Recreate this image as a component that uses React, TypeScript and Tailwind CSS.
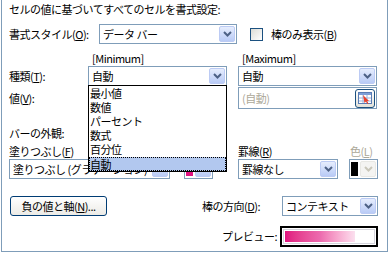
import React from 'react'

function Chevron({ disabled }: { disabled?: boolean }) {
  return (
    <svg width="9" height="6" viewBox="0 0 9 6">
      <path
        d="M1 1 L4.5 4.5 L8 1"
        fill="none"
        stroke={disabled ? '#c9c7ba' : '#4d6185'}
        strokeWidth="2"
      />
    </svg>
  )
}

function ArrowButton({ disabled }: { disabled?: boolean }) {
  if (disabled) {
    return (
      <div className="ml-auto flex h-[16px] w-[16px] shrink-0 items-center justify-center rounded-[2px] border border-[#e8e8e4] bg-[#f4f4f2]">
        <Chevron disabled />
      </div>
    )
  }
  return (
    <div className="ml-auto flex h-[16px] w-[16px] shrink-0 items-center justify-center rounded-[2px] border border-[#bccbf4] bg-linear-to-b from-[#e6edfd] to-[#b9cbf6]">
      <Chevron />
    </div>
  )
}

function Combo({ className, clip, children }: { className: string; clip?: boolean; children?: React.ReactNode }) {
  return (
    <div className={`flex h-[20px] items-center border border-[#7f9db9] bg-white pl-[3px] pr-px ${className}`}>
      <span className={clip ? 'min-w-0 overflow-hidden whitespace-nowrap leading-[18px]' : 'whitespace-nowrap'}>
        {children}
      </span>
      <ArrowButton />
    </div>
  )
}

function RangeIcon() {
  return (
    <div className="flex h-[19px] w-[20px] items-center justify-center rounded-[3px] border border-[#1c5180] bg-linear-to-b from-white to-[#e3e2da]">
      <svg width="14" height="12" viewBox="0 0 14 12">
        <rect x="0.5" y="0.5" width="13" height="11" fill="#fff" stroke="#5a7cb4" />
        <rect x="1" y="1" width="12" height="2" fill="#7d9fd6" />
        <path d="M1 6 H13 M1 9 H13 M5 3 V11 M9 3 V11" stroke="#9db3da" strokeWidth="1" />
        <path d="M5 3 L11 9 L9 9 L10.5 11.5 L9.5 12 L8 9.6 L6.5 11 Z" fill="#e8412c" />
      </svg>
    </div>
  )
}

export default function App() {
  return (
    <div className="h-[254px] w-[390px] bg-white pl-px font-['Noto_Sans_CJK_JP',sans-serif] text-[11px] leading-[13px] tracking-[-0.5px] text-black">
      <div className="relative h-[252px] w-[387px] border-x border-b border-[#7f9db9] pl-[7px]">
        {/* title */}
        <div className="pt-[3px]">セルの値に基づいてすべてのセルを書式設定:</div>

        {/* style row */}
        <div className="mt-[8px] flex h-[20px] items-center">
          <div className="w-[90px]">書式スタイル(<span className="underline">O</span>):</div>
          <Combo className="w-[138px]">データ バー</Combo>
          <div className="ml-[13px] h-[13px] w-[13px] border border-[#1c5180] bg-linear-to-br from-[#dcdcd6] to-white" />
          <div className="ml-[8px]">棒のみ表示(<span className="underline">B</span>)</div>
        </div>

        {/* min / max headings */}
        <div className="mt-[8px] flex h-[13px]">
          <div className="w-[231px] pl-[83px]">[Minimum]</div>
          <div className="pl-[2px]">[Maximum]</div>
        </div>

        {/* type row */}
        <div className="mt-px flex h-[20px] items-center">
          <div className="w-[79px]">種類(<span className="underline">T</span>):</div>
          <Combo className="w-[139px]">自動</Combo>
          <Combo className="ml-[11px] w-[139px]">自動</Combo>
        </div>

        {/* value row */}
        <div className="mt-px flex h-[22px] items-center">
          <div className="w-[79px]">値(<span className="underline">V</span>):</div>
          <div className="flex h-[22px] w-[139px] items-center border border-[#7f9db9] pl-[3px] pr-px text-[#aca899]">(自動)</div>
          <div className="ml-[11px] flex h-[22px] w-[139px] items-center border border-[#7f9db9] pl-[3px] pr-px text-[#aca899]">
            <span>(自動)</span>
            <div className="ml-auto">
              <RangeIcon />
            </div>
          </div>
        </div>

        {/* appearance */}
        <div className="mt-[18px]">バーの外観:</div>

        <div className="mt-[5px] flex h-[13px]">
          <div className="w-[229px]">塗りつぶし(<span className="underline">F</span>)</div>
          <div className="w-[112px]">罫線(<span className="underline">R</span>)</div>
          <div className="text-[#aca899]">色(<span className="underline">L</span>)</div>
        </div>

        <div className="mt-px flex h-[20px] items-center">
          <Combo className="w-[161px]" clip>塗りつぶし (グラデーション)</Combo>
          <div className="ml-[14px] flex h-[20px] w-[29px] items-center border border-[#7f9db9] pl-px pr-px">
            <div className="h-[14px] w-[7px] bg-[#e0117f]" />
            <ArrowButton />
          </div>
          <Combo className="ml-[25px] w-[100px]">罫線なし</Combo>
          <div className="ml-[11px] flex h-[20px] w-[29px] items-center border border-[#7f9db9] pl-px pr-px">
            <div className="h-[14px] w-[7px] bg-black" />
            <ArrowButton disabled />
          </div>
        </div>

        {/* negative / direction */}
        <div className="mt-[17px] flex h-[20px] items-center">
          <div className="ml-px flex h-[20px] w-[97px] items-center justify-center rounded-[3px] border border-[#003c74] bg-linear-to-b from-white to-[#ecebe6]">
            負の値と軸(<span className="underline">N</span>)...
          </div>
          <div className="ml-[95px] w-[80px]">棒の方向(<span className="underline">D</span>):</div>
          <Combo className="w-[96px]">コンテキスト</Combo>
        </div>

        {/* preview */}
        <div className="mt-[10px] flex h-[21px] items-center">
          <div className="ml-[213px] w-[58px]">プレビュー:</div>
          <div className="flex h-[21px] w-[98px] items-center border-2 border-black p-px">
            <div className="flex h-full w-full items-center border border-[#d4d4dc] p-px">
              <div className="h-full w-[70px] bg-linear-to-r from-[#e0117f] via-[#ec6aae] to-[#fbe0ef]" />
            </div>
          </div>
        </div>

        {/* open drop-down list */}
        <div className="absolute left-[86px] top-[85px] w-[139px] border border-black bg-white pt-px">
          <div className="h-[14px] pl-px">最小値</div>
          <div className="h-[14px] pl-px">数値</div>
          <div className="h-[14px] pl-px">パーセント</div>
          <div className="h-[14px] pl-px">数式</div>
          <div className="h-[14px] pl-px">百分位</div>
          <div className="h-[14px] border border-dotted border-black bg-[#b2c8ef] pl-0">自動</div>
        </div>
      </div>
    </div>
  )
}
